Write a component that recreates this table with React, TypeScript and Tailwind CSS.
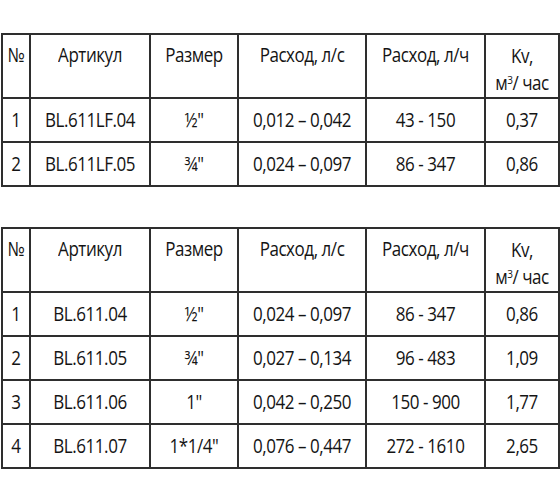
const widths = ["w-[28px]", "w-[120px]", "w-[88px]", "w-[128px]", "w-[119px]", "w-[74px]"];

const table1 = [
  ["1", "BL.611LF.04", "½\"", "0,012 – 0,042", "43 - 150", "0,37"],
  ["2", "BL.611LF.05", "¾\"", "0,024 – 0,097", "86 - 347", "0,86"],
];

const table2 = [
  ["1", "BL.611.04", "½\"", "0,024 – 0,097", "86 - 347", "0,86"],
  ["2", "BL.611.05", "¾\"", "0,027 – 0,134", "96 - 483", "1,09"],
  ["3", "BL.611.06", "1\"", "0,042 – 0,250", "150 - 900", "1,77"],
  ["4", "BL.611.07", "1*1/4\"", "0,076 – 0,447", "272 - 1610", "2,65"],
];

// the source image is stretched vertically, so glyphs are scaled in y
function Txt({ children }: { children: React.ReactNode }) {
  return <span className="inline-block scale-y-[1.15]">{children}</span>;
}

function SpecTable({ rows }: { rows: string[][] }) {
  const head = ["№", "Артикул", "Размер", "Расход, л/с", "Расход, л/ч"];
  return (
    <table className="border-collapse ml-px text-[#141414] text-[17px] tracking-[-0.45px]">
      <thead>
        <tr className="h-[64px]">
          {head.map((h, i) => (
            <th key={h} className={`${widths[i]} border-2 border-[#2e2e2e] align-top pt-[7px] font-normal text-center leading-[26px]`}>
              <Txt>{h}</Txt>
            </th>
          ))}
          <th className={`${widths[5]} border-2 border-[#2e2e2e] align-top pt-[7px] font-normal text-center leading-[27px]`}>
            <Txt>Kv,</Txt>
            <br />
            <Txt>
              м<sup className="text-[10px]">3</sup>/ час
            </Txt>
          </th>
        </tr>
      </thead>
      <tbody>
        {rows.map((r) => (
          <tr key={r[0]} className="h-[44px]">
            {r.map((c, i) => (
              <td key={i} className={`${widths[i]} border-2 border-[#2e2e2e] text-center align-middle`}>
                <Txt>{c}</Txt>
              </td>
            ))}
          </tr>
        ))}
      </tbody>
    </table>
  );
}

export default function App() {
  return (
    <div className="w-[560px] h-[504px] bg-white pt-[33px] font-['Open_Sans',sans-serif]">
      <SpecTable rows={table1} />
      <div className="h-[40px]" />
      <SpecTable rows={table2} />
    </div>
  );
}
